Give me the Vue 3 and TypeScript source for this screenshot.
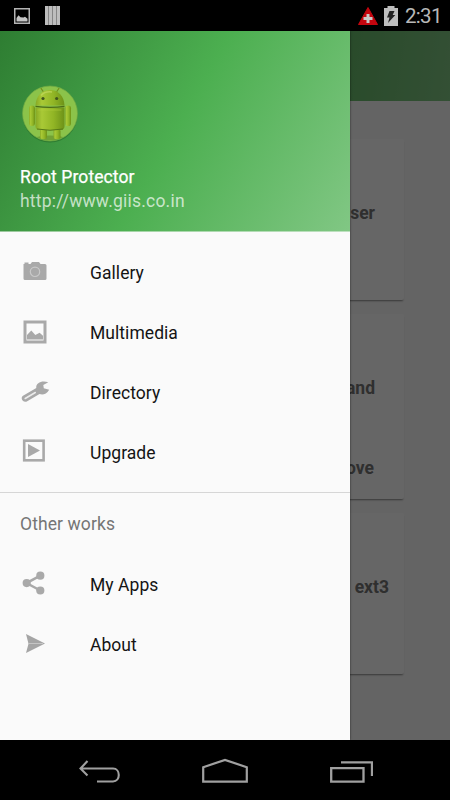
<script setup lang="ts">
interface MenuItem {
  id: string
  label: string
}

interface Card {
  id: string
  lines: string[]
}

const mainItems: MenuItem[] = [
  { id: 'gallery', label: 'Gallery' },
  { id: 'multimedia', label: 'Multimedia' },
  { id: 'directory', label: 'Directory' },
  { id: 'upgrade', label: 'Upgrade' },
]

const otherItems: MenuItem[] = [
  { id: 'apps', label: 'My Apps' },
  { id: 'about', label: 'About' },
]

const groups = [
  { title: '', items: mainItems },
  { title: 'Other works', items: otherItems },
]

const cards: Card[] = [
  { id: 'browser', lines: ['Browser'] },
  { id: 'manage', lines: ['and', 'move'] },
  { id: 'formats', lines: [', ext3'] },
]
</script>

<template>
  <div class="phone">
    <header class="status">
      <div class="status-left">
        <svg class="pic" width="16" height="16" viewBox="0 0 16 16">
          <rect x="0.75" y="0.75" width="14.5" height="14.5" fill="none" stroke="#b4b4b4" stroke-width="1.5" />
          <path d="M2.500 13.500V10l2-2.800 2 2 3 .3 1.500-.7 2.500 2v2.700z" fill="#c4c4c4" />
        </svg>
        <svg class="bars" width="15" height="19" viewBox="0 0 15 19">
          <rect width="15" height="19" fill="#bdbdbd" />
          <path d="M3.500 0v19M7.500 0v19M11.500 0v19" stroke="#858585" stroke-width="1" />
        </svg>
      </div>
      <div class="status-right">
        <svg width="20" height="18" viewBox="0 0 20 18">
          <path d="M10 .5 19.500 17.500H.5z" fill="#c4060f" stroke="#c4060f" stroke-linejoin="round" />
          <path d="M10 7v9M5.500 11.500h9" stroke="#c8c8c8" stroke-width="3" />
        </svg>
        <svg class="battery" width="14" height="20" viewBox="0 0 14 20">
          <path d="M3.500 0h7v2H14v18H0V2h3.500z" fill="#bebebe" />
          <path d="M5.500 5h5L8.700 9h2.600L4 17l1.500-5.500H3z" fill="#222" />
        </svg>
        <span class="clock">2:31</span>
      </div>
    </header>

    <div class="screen">
      <div class="page">
        <div class="toolbar"></div>
        <div class="cards">
          <section v-for="card in cards" :key="card.id" class="card" :class="card.id">
            <p v-for="line in card.lines" :key="line">{{ line }}</p>
          </section>
        </div>
      </div>
      <div class="scrim"></div>

      <aside class="drawer">
        <div class="profile">
          <svg class="avatar" width="58" height="58" viewBox="0 0 58 58">
            <defs>
              <linearGradient id="skin" x1="0" y1="0" x2="1" y2="0">
                <stop offset="0" stop-color="#86a824" />
                <stop offset=".22" stop-color="#a9c936" />
                <stop offset=".62" stop-color="#91b525" />
                <stop offset="1" stop-color="#6d9218" />
              </linearGradient>
              <clipPath id="round"><circle cx="29" cy="28.500" r="27" /></clipPath>
            </defs>
            <circle cx="29" cy="30" r="27.500" fill="#19571c" opacity=".4" />
            <circle cx="29" cy="28.500" r="27.500" fill="#8bc34a" stroke="#6fa943" stroke-width=".7" />
            <g clip-path="url(#round)">
              <ellipse cx="29" cy="53" rx="14" ry="2.500" fill="#587f20" opacity=".5" />
              <rect x="19" y="44" width="7" height="10" rx="2" fill="url(#skin)" />
              <rect x="32.500" y="44" width="7" height="10" rx="2" fill="url(#skin)" />
              <rect x="8" y="20.500" width="6" height="20.500" rx="3" fill="url(#skin)" />
              <rect x="44.300" y="20.500" width="5.700" height="20.500" rx="2.850" fill="url(#skin)" />
              <path d="M19.500 2.500l3 4.500M38.500 2.500l-3 4.500" stroke="#718f1c" stroke-width="1.200" />
              <path d="M14.500 20.500C15 11 20.500 5 29 5s14 6 14.500 15.500z" fill="url(#skin)" />
              <path d="M20 10.500Q24 6 31 7" fill="none" stroke="#c3d961" stroke-width="1.500" opacity=".7" />
              <path d="M14.500 22.500h29V41q0 4-4 4h-21q-4 0-4-4z" fill="url(#skin)" />
              <path d="M14.500 21.300q14.500 2 29 0" fill="none" stroke="#4d6d17" stroke-width="1.300" />
              <path d="M16.500 25h24" stroke="#b2ce3e" stroke-width="1" opacity=".6" />
              <path d="M16 44q13 2.500 26 0" fill="none" stroke="#567817" stroke-width="1" />
              <circle cx="22" cy="13.500" r="1.600" fill="#41551d" />
              <circle cx="35.700" cy="13.500" r="1.600" fill="#41551d" />
            </g>
          </svg>
          <div class="name">Root Protector</div>
          <div class="url">http://www.giis.co.in</div>
        </div>

        <nav v-for="group in groups" :key="group.title" class="group">
          <h2 v-if="group.title">{{ group.title }}</h2>
          <a v-for="item in group.items" :key="item.id" class="item">
            <svg class="icon" width="30" height="30" viewBox="0 0 30 30">
              <template v-if="item.id === 'gallery'">
                <path d="M3.500 7h1V5.500h4V7h2l1.500-2h7l1.500 2H25q1.500 0 1.500 1.500v13q0 1.500-1.500 1.500H5q-1.500 0-1.500-1.500z" fill="#a9a9a9" />
                <circle cx="15" cy="14.800" r="4.700" fill="none" stroke="#c9c9c9" stroke-width="1.200" />
              </template>
              <template v-else-if="item.id === 'multimedia'">
                <rect x="5" y="5" width="20" height="20" fill="none" stroke="#a9a9a9" stroke-width="3" />
                <path d="M7 22.500V18l4.300-4.500 4 4.500 4.300-2.300 3.400 3v3.800z" fill="#a9a9a9" />
              </template>
              <template v-else-if="item.id === 'directory'">
                <path d="M3 18.700 16.300 11C15.500 6.500 21 2.800 28.300 5.200L23.300 8l.5 3.200 5.400 1.500C26.500 17.500 22.500 18 19.500 17L6.800 24.500C3.200 25.800-.3 21.500 3 18.700z" fill="#a9a9a9" />
                <path d="M5.200 21.500 15.300 15.500" stroke="#ececec" stroke-width="1.500" stroke-linecap="round" />
              </template>
              <template v-else-if="item.id === 'upgrade'">
                <rect x="4.200" y="3.700" width="19.400" height="19.600" fill="none" stroke="#a9a9a9" stroke-width="2.600" />
                <path d="M8 7 20 13.500 8 20z" fill="#a9a9a9" />
              </template>
              <template v-else-if="item.id === 'apps'">
                <path d="M20.300 6.700 6.500 14.100 20.300 21.500" fill="none" stroke="#a9a9a9" stroke-width="2.500" />
                <circle cx="6.700" cy="14.100" r="4.100" fill="#a9a9a9" />
                <circle cx="20.300" cy="6.700" r="4.100" fill="#a9a9a9" />
                <circle cx="20.300" cy="21.500" r="4.100" fill="#a9a9a9" />
              </template>
              <template v-else>
                <path d="M6 5 25 14.500 6 24 8.500 14.800z" fill="#a5a5a5" />
                <path d="M8 14.500h15" stroke="#c8c8c8" stroke-width=".9" />
              </template>
            </svg>
            <span>{{ item.label }}</span>
          </a>
        </nav>
      </aside>
    </div>

    <footer class="navbar">
      <svg width="42" height="26" viewBox="0 0 42 26">
        <path d="M2 10.500h32c7.700 0 7.700 13 0 13H18M8.500 3 1.500 10.500l7 7" fill="none" stroke="#a0a0a0" stroke-width="2.100" />
      </svg>
      <svg width="46" height="26" viewBox="0 0 46 26">
        <path d="M1.200 9.200 23 1.900l21.800 7.300v14.500H1.200z" fill="none" stroke="#a0a0a0" stroke-width="2.200" />
      </svg>
      <svg width="44" height="26" viewBox="0 0 44 26">
        <path d="M2.200 10.200h32.300v13.400H2.200zM12 4.300h31v13.700" fill="none" stroke="#a0a0a0" stroke-width="2.300" />
      </svg>
    </footer>
  </div>
</template>

<style>
body {
  margin: 0;
  background: #000;
}
</style>

<style scoped>
.phone {
  display: flex;
  flex-direction: column;
  width: 450px;
  height: 800px;
  overflow: hidden;
  background: #000;
  font-family: Roboto, "Noto Sans", sans-serif;
}
svg {
  display: block;
  flex: none;
}
.status {
  display: flex;
  justify-content: space-between;
  height: 31px;
  flex: none;
  box-sizing: border-box;
  padding: 0 8px 0 14px;
}
.status-left,
.status-right {
  display: flex;
  align-items: center;
}
.status-left {
  gap: 15px;
}
.status-right {
  gap: 6px;
}
.clock {
  width: 37px;
  color: #b8b8b8;
  font-size: 20.5px;
  letter-spacing: -0.7px;
  line-height: 31px;
  margin-left: 1px;
  padding-top: 2px;
  box-sizing: border-box;
}
.screen {
  position: relative;
  flex: 1;
  overflow: hidden;
}
.page {
  height: 100%;
  background: #fafafa;
}
.toolbar {
  height: 70px;
  background: linear-gradient(98.8deg, #2e7d32, #4caf50 50%, #81c784);
}
.cards {
  display: flex;
  flex-direction: column;
  gap: 14px;
  padding: 38px 46px 0;
}
.card {
  box-sizing: border-box;
  height: 161px;
  padding: 60px 29px 0 0;
  border-radius: 2px;
  background: #fff;
  box-shadow: 0 2px 2px -1px rgba(0, 0, 0, 0.45);
}
.card.manage {
  height: 185px;
}
.card.formats {
  padding-right: 15px;
}
.card p {
  margin: 0 0 53px;
  color: #757575;
  font-size: 17.5px;
  font-weight: 700;
  line-height: 28px;
  text-align: right;
}
.card p + p {
  margin-top: -1px;
  padding-right: 1px;
}
.scrim {
  position: absolute;
  inset: 0;
  background: rgba(0, 0, 0, 0.6);
}
.drawer {
  position: absolute;
  top: 0;
  bottom: 0;
  left: 0;
  width: 350px;
  background: #fafafa;
  box-shadow: 0 0 2px rgba(0, 0, 0, 0.6);
}
.profile {
  box-sizing: border-box;
  height: 201px;
  padding: 54px 20px 0;
  border-bottom: 1px solid rgba(250, 250, 250, 0.5);
  background: linear-gradient(119.7deg, #2e7d32, #4caf50 50%, #81c784) border-box;
}
.avatar {
  margin-left: 1px;
}
.name,
.url {
  color: #fff;
  font-size: 17.5px;
  line-height: 24px;
}
.name {
  margin-top: 22px;
  letter-spacing: 0.1px;
  -webkit-text-stroke: 0.25px #fff;
}
.url {
  color: rgba(255, 255, 255, 0.7);
  letter-spacing: 0.21px;
}
.group {
  padding-top: 10px;
}
.group + .group {
  margin-top: 10px;
  padding-top: 1px;
  border-top: 1px solid #d6d6d6;
}
h2 {
  margin: 0;
  padding-left: 20px;
  color: #757575;
  font-size: 17.5px;
  font-weight: 400;
  letter-spacing: 0.1px;
  line-height: 60px;
}
.item {
  display: flex;
  align-items: center;
  gap: 40px;
  height: 60px;
  padding-left: 20px;
  color: #141414;
  font-size: 17.5px;
  letter-spacing: 0.05px;
}
.item span {
  padding-top: 2px;
}
.navbar {
  display: flex;
  align-items: center;
  gap: 81px;
  box-sizing: border-box;
  height: 60px;
  flex: none;
  padding: 2px 0 0 79px;
}
</style>
